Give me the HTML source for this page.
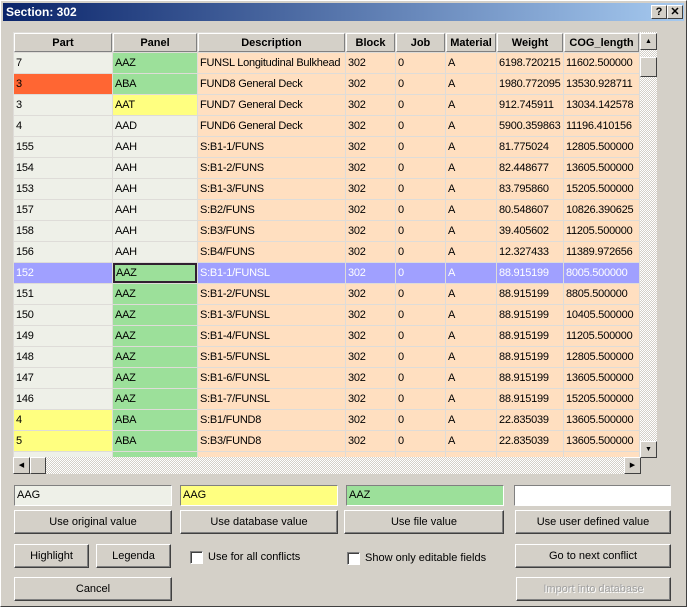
<!DOCTYPE html>
<html><head><style>
*{box-sizing:border-box;margin:0;padding:0}
body{width:687px;height:607px;background:#d4d0c8;font-family:"Liberation Sans",sans-serif;font-size:11px;position:relative;overflow:hidden}
.win{position:absolute;left:0;top:0;width:687px;height:607px;border:1px solid #fff;border-right-color:#404040;border-bottom-color:#404040}
.title{position:absolute;left:3px;top:3px;width:681px;height:18px;background:linear-gradient(90deg,#0a246a,#a6caf0);color:#fff;font-weight:bold;font-size:12px;line-height:18px;padding-left:3px}
.tb{position:absolute;top:2px;width:16px;height:14px;background:#d4d0c8;border:1px solid;border-color:#fff #404040 #404040 #fff;color:#000;font-size:11px;line-height:12px;text-align:center;font-weight:bold}
.grid{position:absolute;left:13px;top:32px;width:628px;height:425px;overflow:hidden;background:#dedcd8}
table{border-collapse:separate;border-spacing:1px;table-layout:fixed;position:absolute;left:0;top:0;width:648px}
td,th{height:20px;white-space:nowrap;overflow:hidden;padding-left:1px;text-align:left;font-weight:normal;letter-spacing:-0.25px}
th{background:#d4d0c8;border:1px solid;border-color:#fff #808080 #808080 #fff;text-align:center;font-weight:bold;height:19px;padding:0;letter-spacing:0}
td{border:1px solid transparent}
.p{background:#eef0e8}.g{background:#9ce09a}.y{background:#ffff80}.o{background:#ff6633}.k{background:#ffdfc0}
tr.sel td{background:#a0a0ff;color:#fff}
tr.sel td.cur{background:#9ce09a;color:#000;border:2px solid #302030}
.vs{position:absolute;left:640px;top:32px;width:17px;height:425px;background:repeating-conic-gradient(#d4d0c8 0 25%,#fff 0 50%) 0 0/2px 2px}
.hs{position:absolute;left:13px;top:457px;width:628px;height:17px;background:repeating-conic-gradient(#d4d0c8 0 25%,#fff 0 50%) 0 0/2px 2px}
.sb{position:absolute;width:17px;height:17px;background:#d4d0c8;border:1px solid;border-color:#fff #404040 #404040 #fff;font-size:7px;line-height:15px;text-align:center}
.field{position:absolute;top:485px;height:21px;border:1px solid;border-color:#808080 #fff #fff #808080;padding-left:2px;line-height:19px;font-size:11px}
.btn{position:absolute;height:24px;background:#d4d0c8;border:1px solid;border-color:#fff #404040 #404040 #fff;box-shadow:inset -1px -1px #808080;text-align:center;line-height:22px;font-size:11px}
.cb{position:absolute;width:13px;height:13px;background:#fff;border:1px solid;border-color:#808080 #fff #fff #808080;box-shadow:inset 1px 1px #404040}
.lbl{position:absolute;font-size:11px}
</style></head><body>
<div class="win"></div>
<div class="title">Section: 302
<div class="tb" style="left:648px">?</div><div class="tb" style="left:664px">✕</div></div>
<div class="grid"><table>
<colgroup><col style="width:98px"><col style="width:84px"><col style="width:147px"><col style="width:49px"><col style="width:49px"><col style="width:50px"><col style="width:66px"><col style="width:75px"><col style="width:20px"></colgroup>
<tr><th>Part</th><th>Panel</th><th>Description</th><th>Block</th><th>Job</th><th>Material</th><th>Weight</th><th>COG_length</th><th>C</th></tr>
<tr><td class="p">7</td><td class="g">AAZ</td><td class="k">FUNSL Longitudinal Bulkhead</td><td class="k">302</td><td class="k">0</td><td class="k">A</td><td class="k">6198.720215</td><td class="k">11602.500000</td><td class="k"></td></tr>
<tr><td class="o">3</td><td class="g">ABA</td><td class="k">FUND8 General Deck</td><td class="k">302</td><td class="k">0</td><td class="k">A</td><td class="k">1980.772095</td><td class="k">13530.928711</td><td class="k"></td></tr>
<tr><td class="p">3</td><td class="y">AAT</td><td class="k">FUND7 General Deck</td><td class="k">302</td><td class="k">0</td><td class="k">A</td><td class="k">912.745911</td><td class="k">13034.142578</td><td class="k"></td></tr>
<tr><td class="p">4</td><td class="p">AAD</td><td class="k">FUND6 General Deck</td><td class="k">302</td><td class="k">0</td><td class="k">A</td><td class="k">5900.359863</td><td class="k">11196.410156</td><td class="k"></td></tr>
<tr><td class="p">155</td><td class="p">AAH</td><td class="k">S:B1-1/FUNS</td><td class="k">302</td><td class="k">0</td><td class="k">A</td><td class="k">81.775024</td><td class="k">12805.500000</td><td class="k"></td></tr>
<tr><td class="p">154</td><td class="p">AAH</td><td class="k">S:B1-2/FUNS</td><td class="k">302</td><td class="k">0</td><td class="k">A</td><td class="k">82.448677</td><td class="k">13605.500000</td><td class="k"></td></tr>
<tr><td class="p">153</td><td class="p">AAH</td><td class="k">S:B1-3/FUNS</td><td class="k">302</td><td class="k">0</td><td class="k">A</td><td class="k">83.795860</td><td class="k">15205.500000</td><td class="k"></td></tr>
<tr><td class="p">157</td><td class="p">AAH</td><td class="k">S:B2/FUNS</td><td class="k">302</td><td class="k">0</td><td class="k">A</td><td class="k">80.548607</td><td class="k">10826.390625</td><td class="k"></td></tr>
<tr><td class="p">158</td><td class="p">AAH</td><td class="k">S:B3/FUNS</td><td class="k">302</td><td class="k">0</td><td class="k">A</td><td class="k">39.405602</td><td class="k">11205.500000</td><td class="k"></td></tr>
<tr><td class="p">156</td><td class="p">AAH</td><td class="k">S:B4/FUNS</td><td class="k">302</td><td class="k">0</td><td class="k">A</td><td class="k">12.327433</td><td class="k">11389.972656</td><td class="k"></td></tr>
<tr class="sel"><td>152</td><td class="cur">AAZ</td><td>S:B1-1/FUNSL</td><td>302</td><td>0</td><td>A</td><td>88.915199</td><td>8005.500000</td><td></td></tr>
<tr><td class="p">151</td><td class="g">AAZ</td><td class="k">S:B1-2/FUNSL</td><td class="k">302</td><td class="k">0</td><td class="k">A</td><td class="k">88.915199</td><td class="k">8805.500000</td><td class="k"></td></tr>
<tr><td class="p">150</td><td class="g">AAZ</td><td class="k">S:B1-3/FUNSL</td><td class="k">302</td><td class="k">0</td><td class="k">A</td><td class="k">88.915199</td><td class="k">10405.500000</td><td class="k"></td></tr>
<tr><td class="p">149</td><td class="g">AAZ</td><td class="k">S:B1-4/FUNSL</td><td class="k">302</td><td class="k">0</td><td class="k">A</td><td class="k">88.915199</td><td class="k">11205.500000</td><td class="k"></td></tr>
<tr><td class="p">148</td><td class="g">AAZ</td><td class="k">S:B1-5/FUNSL</td><td class="k">302</td><td class="k">0</td><td class="k">A</td><td class="k">88.915199</td><td class="k">12805.500000</td><td class="k"></td></tr>
<tr><td class="p">147</td><td class="g">AAZ</td><td class="k">S:B1-6/FUNSL</td><td class="k">302</td><td class="k">0</td><td class="k">A</td><td class="k">88.915199</td><td class="k">13605.500000</td><td class="k"></td></tr>
<tr><td class="p">146</td><td class="g">AAZ</td><td class="k">S:B1-7/FUNSL</td><td class="k">302</td><td class="k">0</td><td class="k">A</td><td class="k">88.915199</td><td class="k">15205.500000</td><td class="k"></td></tr>
<tr><td class="y">4</td><td class="g">ABA</td><td class="k">S:B1/FUND8</td><td class="k">302</td><td class="k">0</td><td class="k">A</td><td class="k">22.835039</td><td class="k">13605.500000</td><td class="k"></td></tr>
<tr><td class="y">5</td><td class="g">ABA</td><td class="k">S:B3/FUND8</td><td class="k">302</td><td class="k">0</td><td class="k">A</td><td class="k">22.835039</td><td class="k">13605.500000</td><td class="k"></td></tr>
<tr><td class="p">43</td><td class="g">AAZ</td><td class="k">S:B1-1/FUND8</td><td class="k">302</td><td class="k">0</td><td class="k">A</td><td class="k">110.887573</td><td class="k">8005.500000</td><td class="k"></td></tr>
</table></div>
<div class="vs"></div>
<div class="sb" style="left:640px;top:33px">▲</div>
<div class="sb" style="left:640px;top:57px;height:20px"></div>
<div class="sb" style="left:640px;top:441px">▼</div>
<div class="hs"></div>
<div class="sb" style="left:13px;top:457px">◀</div>
<div class="sb" style="left:30px;top:457px;width:16px"></div>
<div class="sb" style="left:624px;top:457px">▶</div>

<div class="field" style="left:14px;width:158px;background:#eef0e8">AAG</div>
<div class="field" style="left:180px;width:158px;background:#ffff80">AAG</div>
<div class="field" style="left:346px;width:158px;background:#9ce09a">AAZ</div>
<div class="field" style="left:514px;width:157px;background:#fff"></div>

<div class="btn" style="left:14px;top:510px;width:158px">Use original value</div>
<div class="btn" style="left:180px;top:510px;width:158px">Use database value</div>
<div class="btn" style="left:344px;top:510px;width:160px">Use file value</div>
<div class="btn" style="left:515px;top:510px;width:156px">Use user defined value</div>

<div class="btn" style="left:14px;top:544px;width:75px">Highlight</div>
<div class="btn" style="left:96px;top:544px;width:75px">Legenda</div>
<div class="cb" style="left:190px;top:551px"></div><div class="lbl" style="left:208px;top:551px">Use for all conflicts</div>
<div class="cb" style="left:347px;top:552px"></div><div class="lbl" style="left:365px;top:552px">Show only editable fields</div>
<div class="btn" style="left:515px;top:544px;width:156px">Go to next conflict</div>

<div class="btn" style="left:14px;top:577px;width:158px">Cancel</div>
<div class="btn" style="left:516px;top:577px;width:155px;color:#a0a0a0;text-shadow:1px 1px #fff">Import into database</div>
</body></html>
